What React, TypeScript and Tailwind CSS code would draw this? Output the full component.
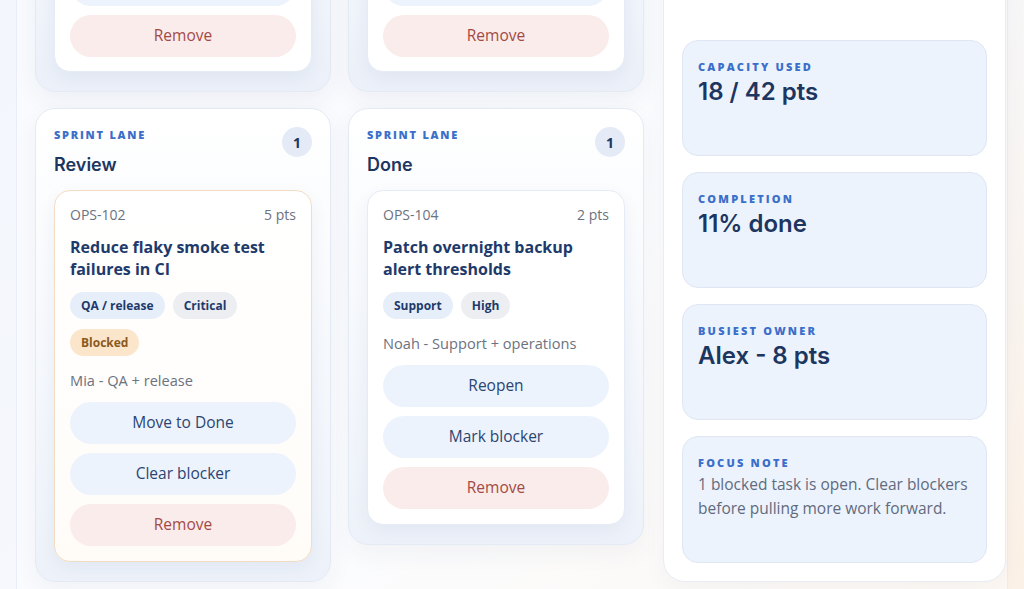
import React from 'react'

type Tag = { label: string; tone: 'blue' | 'gray' | 'amber' }

interface Task {
  id: string
  points: number
  title: string
  tags: Tag[]
  owner: string
  actions: string[]
  blocked?: boolean
}

const body = { fontFamily: '"Open Sans", "Liberation Sans", sans-serif' }
const display = { fontFamily: 'Inter, "Liberation Sans", sans-serif' }

const tagTone: Record<Tag['tone'], string> = {
  blue: 'bg-[#e6eefa] text-[#1e3a6b]',
  gray: 'bg-[#eceef2] text-[#1e3a6b]',
  amber: 'bg-[#fbe6cc] text-[#8b5a1e]',
}

const lanes: { name: string; tasks: Task[] }[] = [
  {
    name: 'Review',
    tasks: [
      {
        id: 'OPS-102',
        points: 5,
        title: 'Reduce flaky smoke test failures in CI',
        tags: [
          { label: 'QA / release', tone: 'blue' },
          { label: 'Critical', tone: 'gray' },
          { label: 'Blocked', tone: 'amber' },
        ],
        owner: 'Mia - QA + release',
        actions: ['Move to Done', 'Clear blocker'],
        blocked: true,
      },
    ],
  },
  {
    name: 'Done',
    tasks: [
      {
        id: 'OPS-104',
        points: 2,
        title: 'Patch overnight backup alert thresholds',
        tags: [
          { label: 'Support', tone: 'blue' },
          { label: 'High', tone: 'gray' },
        ],
        owner: 'Noah - Support + operations',
        actions: ['Reopen', 'Mark blocker'],
      },
    ],
  },
]

const stats = [
  { label: 'Capacity used', value: '18 / 42 pts' },
  { label: 'Completion', value: '11% done' },
  { label: 'Busiest owner', value: 'Alex - 8 pts' },
]

function ActionButton({ label, danger }: { label: string; danger?: boolean }) {
  return (
    <button
      className={
        danger
          ? 'h-[42px] w-full rounded-full bg-[#f9ecea] text-[15.5px] text-[#a34a45]'
          : 'h-[42px] w-full rounded-full bg-[#edf3fc] text-[15.5px] text-[#2b4572]'
      }
    >
      {label}
    </button>
  )
}

function TaskCard({ task }: { task: Task }) {
  return (
    <div
      className={
        task.blocked
          ? 'rounded-[16px] border border-[#f4dcc2] bg-gradient-to-b from-white to-[#fffcf8] px-[15px] pt-[15px] pb-[15px] shadow-[0_6px_18px_rgba(30,58,107,0.06)]'
          : 'rounded-[16px] border border-[#e6ecf5] bg-white px-[15px] pt-[15px] pb-[15px] shadow-[0_6px_18px_rgba(30,58,107,0.06)]'
      }
    >
      <div className="flex items-center justify-between text-[14px] leading-[18px] text-[#6b7280]">
        <span>{task.id}</span>
        <span>{task.points} pts</span>
      </div>
      <h3 className="mt-[12px] text-[16px] font-bold leading-[22px] text-[#1e3a6b]">{task.title}</h3>
      <div className="mt-[12px] flex flex-wrap gap-x-2 gap-y-[10px]">
        {task.tags.map((t) => (
          <span
            key={t.label}
            className={`flex h-[27px] items-center rounded-full px-[11px] text-[12px] font-bold ${tagTone[t.tone]}`}
          >
            {t.label}
          </span>
        ))}
      </div>
      <p className="mt-[14px] text-[14.6px] leading-[20px] text-[#6b7280]">{task.owner}</p>
      <div className="mt-3 flex flex-col gap-[9px]">
        {task.actions.map((a) => (
          <ActionButton key={a} label={a} />
        ))}
        <ActionButton label="Remove" danger />
      </div>
    </div>
  )
}

function PartialLane() {
  // bottom of a lane scrolled above the fold; its upper button is off screen
  return (
    <div className="rounded-[20px] border border-[#e3eaf4] bg-gradient-to-b from-[#f4f7fc] to-[#ebf0f9] px-[18px] pt-[18px] pb-[19px] shadow-[0_8px_24px_rgba(30,58,107,0.06)]">
      <div className="rounded-[16px] border border-[#e6ecf5] bg-white px-[15px] pt-[15px] pb-[14px] shadow-[0_6px_18px_rgba(30,58,107,0.06)]">
        <div className="flex flex-col gap-[9px]">
          <div className="h-[42px] w-full rounded-full bg-[#edf3fc]" />
          <ActionButton label="Remove" danger />
        </div>
      </div>
    </div>
  )
}

function Lane({ name, tasks }: { name: string; tasks: Task[] }) {
  return (
    <div className="rounded-[20px] border border-[#e3eaf4] bg-gradient-to-b from-white to-[#edf2fa] px-[18px] pt-[18px] pb-[19px] shadow-[0_8px_24px_rgba(30,58,107,0.05)]">
      <div className="flex items-start justify-between">
        <div className="pt-[1px]">
          <div className="text-[11px] font-extrabold uppercase leading-[14px] tracking-[0.16em] text-[#3b6fc9]">
            Sprint lane
          </div>
          <h2 style={display} className="mt-[11px] text-[18px] font-semibold leading-[24px] text-[#1d3660]">
            {name}
          </h2>
        </div>
        <span className="flex h-[30px] w-[30px] items-center justify-center rounded-full bg-[#e4ebf6] text-[14px] font-bold text-[#1d3660]">
          {tasks.length}
        </span>
      </div>
      <div className="mt-[13px] flex flex-col gap-3">
        {tasks.map((t) => (
          <TaskCard key={t.id} task={t} />
        ))}
      </div>
    </div>
  )
}

function StatCard({ label, children, tall }: { label: string; children: React.ReactNode; tall?: boolean }) {
  return (
    <div
      className={`rounded-[16px] border border-[#dfe7f4] bg-[#edf3fd] px-[15px] pt-[19px] ${tall ? 'h-[127px]' : 'h-[116px]'}`}
    >
      <div className="text-[11px] font-extrabold uppercase leading-[14px] tracking-[0.2em] text-[#3b6fc9]">
        {label}
      </div>
      {children}
    </div>
  )
}

export default function App() {
  return (
    <div
      style={body}
      className="h-[589px] w-[1024px] overflow-hidden bg-[linear-gradient(135deg,#f3f6fc_0%,#f6f8fc_55%,#fcf1e6_100%)] px-4"
    >
      <div className="-mt-[96px] rounded-[28px] border border-[#e9eef6] bg-white/50 pt-[24px] pb-10 pl-[18px] pr-[1px]">
        <div className="grid grid-cols-[609px_343px] items-start gap-x-[19px]">
          <div className="grid grid-cols-2 content-start items-start gap-x-[17px] gap-y-4">
            <PartialLane />
            <PartialLane />
            {lanes.map((l) => (
              <Lane key={l.name} name={l.name} tasks={l.tasks} />
            ))}
          </div>
          <aside className="rounded-[22px] border border-[#e8edf5] bg-white px-[18px] pt-[110px] pb-[18px] shadow-[0_8px_24px_rgba(30,58,107,0.04)]">
            <div className="flex flex-col gap-4">
              {stats.map((s) => (
                <StatCard key={s.label} label={s.label}>
                  <div style={display} className="mt-[4px] text-[24px] font-semibold leading-[28px] text-[#1d3660]">
                    {s.value}
                  </div>
                </StatCard>
              ))}
              <StatCard label="Focus note" tall>
                <p className="mt-[2px] text-[15.5px] leading-[24px] text-[#5f6b7d]">
                  1 blocked task is open. Clear blockers before pulling more work forward.
                </p>
              </StatCard>
            </div>
          </aside>
        </div>
      </div>
    </div>
  )
}
